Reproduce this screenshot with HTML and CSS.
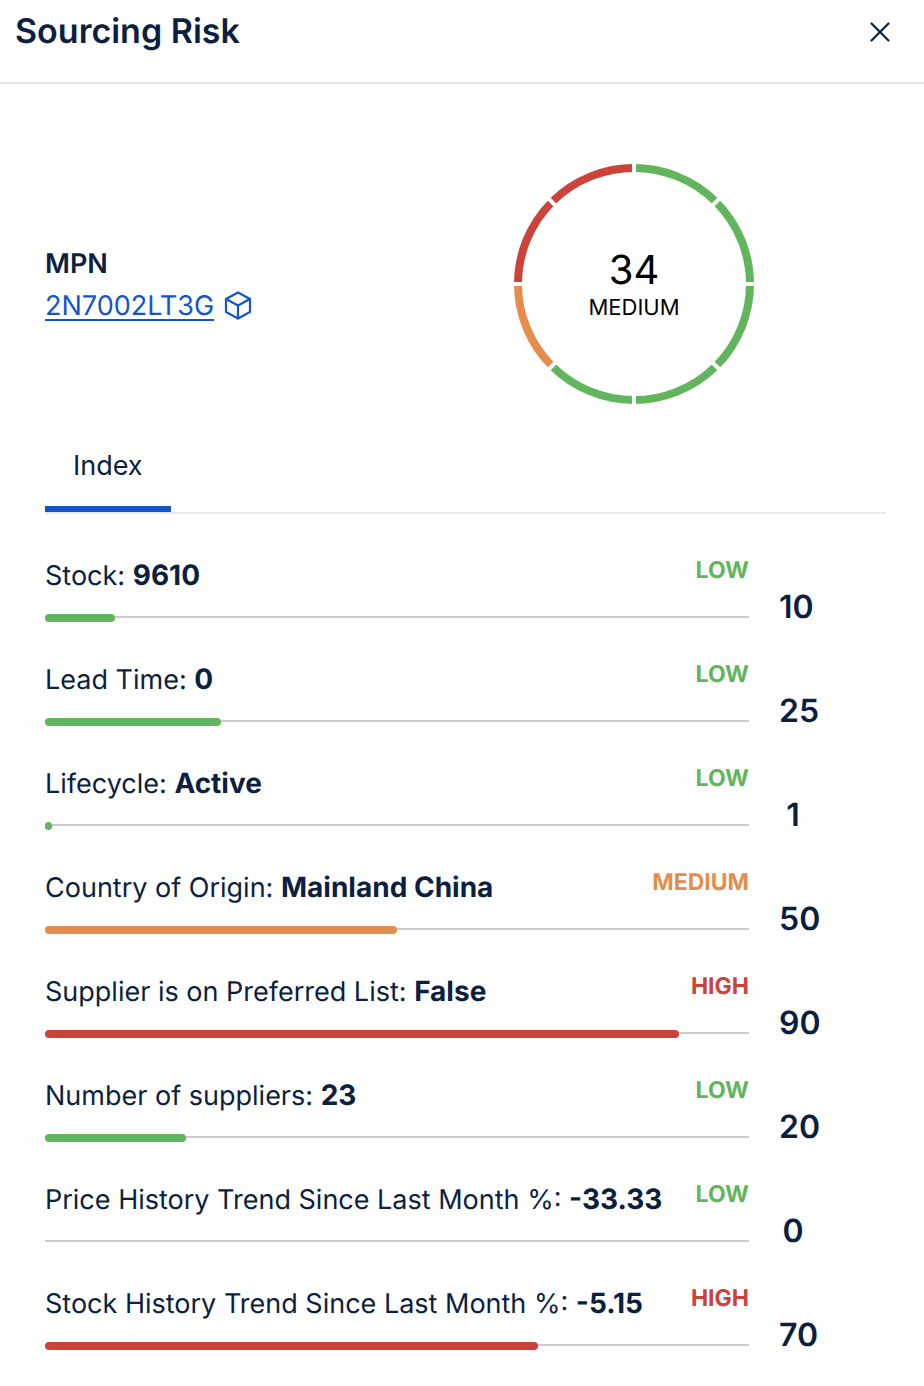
FILE: index.html
```html
<!DOCTYPE html>
<html lang="en">
<head>
    <meta charset="UTF-8">
    <meta name="viewport" content="width=device-width, initial-scale=1.0">
    <title>Sourcing Risk</title>
    <link rel="stylesheet" href="styles.css">
</head>
<body>

    <header class="header">
        <h1>Sourcing Risk</h1>
        <button class="close" type="button" aria-label="Close">
            <svg width="20" height="20" viewBox="0 0 20 20" fill="none" stroke="currentColor" stroke-width="2.2" stroke-linecap="round">
                <path d="M1.5 1.5 L18.5 18.5 M18.5 1.5 L1.5 18.5"/>
            </svg>
        </button>
    </header>

    <main class="content">
        <section class="summary">
            <div class="part">
                <h2>MPN</h2>
                <div class="part-number">
                    <a href="#">2N7002LT3G</a>
                    <svg width="28" height="30" viewBox="0 0 28 30" fill="none" stroke="currentColor" stroke-width="2.2" stroke-linejoin="round" stroke-linecap="round">
                        <path d="M14 1.5 L26 8 V21 L14 27.5 L2 21 V8 Z"/>
                        <path d="M2 8 L14 14.5 L26 8 M14 14.5 V27.5"/>
                    </svg>
                </div>
            </div>

            <div class="gauge">
                <svg class="ring" viewBox="0 0 240 240" fill="none" stroke-width="8">
                    <path class="low" d="M120 4 A116 116 0 0 1 120 236 A116 116 0 0 1 37.98 202.02"/>
                    <path class="medium" d="M37.98 202.02 A116 116 0 0 1 4 120"/>
                    <path class="high" d="M4 120 A116 116 0 0 1 120 4"/>
                    <!-- gaps between the eight segments -->
                    <path class="gaps" d="M120 0 V240 M0 120 H240 M30 30 L210 210 M210 30 L30 210"/>
                </svg>
                <div class="gauge-text">
                    <span class="gauge-score">34</span>
                    <span class="gauge-level">MEDIUM</span>
                </div>
            </div>
        </section>

        <nav class="tabs">
            <button class="tab" type="button">Index</button>
        </nav>

        <ul class="risks">
            <li class="risk low">
                <div class="risk-main">
                    <div class="risk-label"><p>Stock: <b>9610</b></p><span class="level">LOW</span></div>
                    <div class="track"><div class="bar" style="width: 10%"></div></div>
                </div>
                <span class="score">10</span>
            </li>
            <li class="risk low">
                <div class="risk-main">
                    <div class="risk-label"><p>Lead Time: <b>0</b></p><span class="level">LOW</span></div>
                    <div class="track"><div class="bar" style="width: 25%"></div></div>
                </div>
                <span class="score">25</span>
            </li>
            <li class="risk low">
                <div class="risk-main">
                    <div class="risk-label"><p>Lifecycle: <b>Active</b></p><span class="level">LOW</span></div>
                    <div class="track"><div class="bar" style="width: 1%"></div></div>
                </div>
                <span class="score">1</span>
            </li>
            <li class="risk medium">
                <div class="risk-main">
                    <div class="risk-label"><p>Country of Origin: <b>Mainland China</b></p><span class="level">MEDIUM</span></div>
                    <div class="track"><div class="bar" style="width: 50%"></div></div>
                </div>
                <span class="score">50</span>
            </li>
            <li class="risk high">
                <div class="risk-main">
                    <div class="risk-label"><p>Supplier is on Preferred List: <b>False</b></p><span class="level">HIGH</span></div>
                    <div class="track"><div class="bar" style="width: 90%"></div></div>
                </div>
                <span class="score">90</span>
            </li>
            <li class="risk low">
                <div class="risk-main">
                    <div class="risk-label"><p>Number of suppliers: <b>23</b></p><span class="level">LOW</span></div>
                    <div class="track"><div class="bar" style="width: 20%"></div></div>
                </div>
                <span class="score">20</span>
            </li>
            <li class="risk low">
                <div class="risk-main">
                    <div class="risk-label"><p>Price History Trend Since Last Month %: <b>-33.33</b></p><span class="level">LOW</span></div>
                    <div class="track"><div class="bar" style="width: 0%"></div></div>
                </div>
                <span class="score">0</span>
            </li>
            <li class="risk high">
                <div class="risk-main">
                    <div class="risk-label"><p>Stock History Trend Since Last Month %: <b>-5.15</b></p><span class="level">HIGH</span></div>
                    <div class="track"><div class="bar" style="width: 70%"></div></div>
                </div>
                <span class="score">70</span>
            </li>
        </ul>
    </main>

</body>
</html>
```

FILE: styles.css
```css
* {
    box-sizing: border-box;
    margin: 0;
    padding: 0;
}
body {
    font-family: Inter, "Liberation Sans", sans-serif;
    font-size: 27px;
    line-height: 36px;
    color: #0c1f3f;
    background: #fff;
    text-rendering: geometricPrecision;
}
button {
    font: inherit;
    color: inherit;
    background: none;
    border: none;
    cursor: pointer;
}
.low {
    color: #61b55c;
}
.medium {
    color: #e48d4c;
}
.high {
    color: #cb433b;
}
.header {
    display: flex;
    justify-content: space-between;
    align-items: center;
    padding: 9px 34px 27px 15px;
    border-bottom: 2px solid #e6eaef;
}
h1 {
    font-size: 34px;
    font-weight: 600;
    line-height: 46px;
}
.close {
    display: flex;
}
.content {
    padding: 80px 38px 32px 45px;
}
.summary {
    display: flex;
    justify-content: space-between;
    align-items: center;
    padding-right: 132px;
}
.part {
    padding-top: 2px;
    line-height: 42px;
}
h2 {
    font-size: 27px;
    font-weight: 600;
}
.part-number {
    display: flex;
    align-items: center;
    gap: 10px;
    color: #1555cc;
}
.part-number a {
    color: inherit;
    text-decoration-thickness: 2px;
    text-underline-offset: 4px;
}
.gauge {
    display: grid;
    place-items: center;
    width: 240px;
}
.ring,
.gauge-text {
    grid-area: 1 / 1;
}
.ring {
    display: block;
    width: 100%;
}
.ring path {
    stroke: currentColor;
}
.ring .gaps {
    stroke: #fff;
    stroke-width: 4;
}
.gauge-text {
    display: flex;
    flex-direction: column;
    align-items: center;
    color: #000;
}
.gauge-score {
    font-size: 40px;
    line-height: 48px;
}
.gauge-level {
    font-size: 22px;
    line-height: 28px;
}
.tabs {
    display: flex;
    margin-top: 43px;
    border-bottom: 2px solid #e6eaef;
}
.tab {
    padding: 1px 28px 22px;
    border-bottom: 6px solid #1555cc;
}
.risks {
    display: flex;
    flex-direction: column;
    gap: 34px;
    margin-top: 43px;
    list-style: none;
}
.risk {
    display: grid;
    grid-template-columns: 1fr 107px;
    gap: 30px;
}
.risk-label {
    display: flex;
    justify-content: space-between;
    margin-bottom: 20px;
}
.risk-label p,
.score {
    color: #0c1f3f;
}
.risk-label b {
    font-size: 28px;
    font-weight: 700;
}
.level {
    font-size: 23px;
    font-weight: 700;
    line-height: 26px;
}
/* thin grey line with the thicker bar over it */
.track {
    height: 8px;
    background: linear-gradient(#ccc, #ccc) 0 2px / 100% 2px no-repeat;
}
.bar {
    height: 8px;
    border-radius: 4px;
    background: currentColor;
}
.score {
    justify-self: start;
    min-width: 28px;
    padding-top: 30px;
    font-size: 32px;
    font-weight: 600;
    line-height: 40px;
    text-align: center;
}
```
